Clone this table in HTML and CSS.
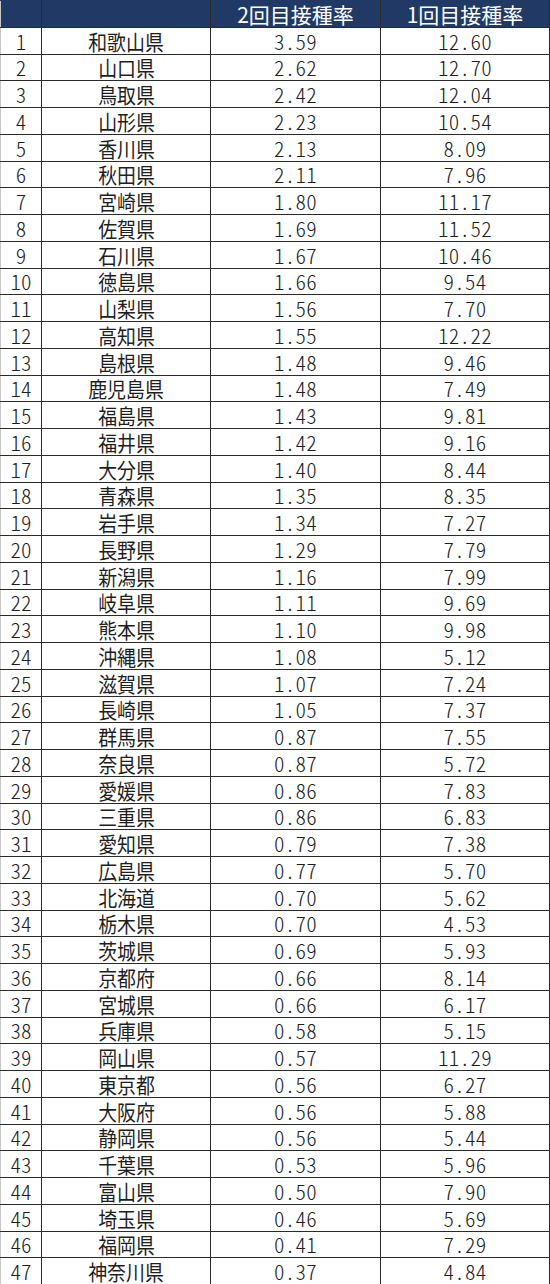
FILE: index.html
```html
<!DOCTYPE html>
<html lang="ja">
<head>
<meta charset="utf-8">
<title>接種率</title>
<link rel="stylesheet" href="styles.css">
</head>
<body>
<table class="rate-table">
  <colgroup>
    <col class="c-rank">
    <col class="c-pref">
    <col class="c-second">
    <col class="c-first">
  </colgroup>
  <thead>
    <tr>
      <th></th>
      <th></th>
      <th>2回目接種率</th>
      <th>1回目接種率</th>
    </tr>
  </thead>
  <tbody>
    <tr><td class="rank">1</td><td class="pref"><span>和歌山県</span></td><td class="num">3.59</td><td class="num">12.60</td></tr>
    <tr><td class="rank">2</td><td class="pref"><span>山口県</span></td><td class="num">2.62</td><td class="num">12.70</td></tr>
    <tr><td class="rank">3</td><td class="pref"><span>鳥取県</span></td><td class="num">2.42</td><td class="num">12.04</td></tr>
    <tr><td class="rank">4</td><td class="pref"><span>山形県</span></td><td class="num">2.23</td><td class="num">10.54</td></tr>
    <tr><td class="rank">5</td><td class="pref"><span>香川県</span></td><td class="num">2.13</td><td class="num">8.09</td></tr>
    <tr><td class="rank">6</td><td class="pref"><span>秋田県</span></td><td class="num">2.11</td><td class="num">7.96</td></tr>
    <tr><td class="rank">7</td><td class="pref"><span>宮崎県</span></td><td class="num">1.80</td><td class="num">11.17</td></tr>
    <tr><td class="rank">8</td><td class="pref"><span>佐賀県</span></td><td class="num">1.69</td><td class="num">11.52</td></tr>
    <tr><td class="rank">9</td><td class="pref"><span>石川県</span></td><td class="num">1.67</td><td class="num">10.46</td></tr>
    <tr><td class="rank">10</td><td class="pref"><span>徳島県</span></td><td class="num">1.66</td><td class="num">9.54</td></tr>
    <tr><td class="rank">11</td><td class="pref"><span>山梨県</span></td><td class="num">1.56</td><td class="num">7.70</td></tr>
    <tr><td class="rank">12</td><td class="pref"><span>高知県</span></td><td class="num">1.55</td><td class="num">12.22</td></tr>
    <tr><td class="rank">13</td><td class="pref"><span>島根県</span></td><td class="num">1.48</td><td class="num">9.46</td></tr>
    <tr><td class="rank">14</td><td class="pref"><span>鹿児島県</span></td><td class="num">1.48</td><td class="num">7.49</td></tr>
    <tr><td class="rank">15</td><td class="pref"><span>福島県</span></td><td class="num">1.43</td><td class="num">9.81</td></tr>
    <tr><td class="rank">16</td><td class="pref"><span>福井県</span></td><td class="num">1.42</td><td class="num">9.16</td></tr>
    <tr><td class="rank">17</td><td class="pref"><span>大分県</span></td><td class="num">1.40</td><td class="num">8.44</td></tr>
    <tr><td class="rank">18</td><td class="pref"><span>青森県</span></td><td class="num">1.35</td><td class="num">8.35</td></tr>
    <tr><td class="rank">19</td><td class="pref"><span>岩手県</span></td><td class="num">1.34</td><td class="num">7.27</td></tr>
    <tr><td class="rank">20</td><td class="pref"><span>長野県</span></td><td class="num">1.29</td><td class="num">7.79</td></tr>
    <tr><td class="rank">21</td><td class="pref"><span>新潟県</span></td><td class="num">1.16</td><td class="num">7.99</td></tr>
    <tr><td class="rank">22</td><td class="pref"><span>岐阜県</span></td><td class="num">1.11</td><td class="num">9.69</td></tr>
    <tr><td class="rank">23</td><td class="pref"><span>熊本県</span></td><td class="num">1.10</td><td class="num">9.98</td></tr>
    <tr><td class="rank">24</td><td class="pref"><span>沖縄県</span></td><td class="num">1.08</td><td class="num">5.12</td></tr>
    <tr><td class="rank">25</td><td class="pref"><span>滋賀県</span></td><td class="num">1.07</td><td class="num">7.24</td></tr>
    <tr><td class="rank">26</td><td class="pref"><span>長崎県</span></td><td class="num">1.05</td><td class="num">7.37</td></tr>
    <tr><td class="rank">27</td><td class="pref"><span>群馬県</span></td><td class="num">0.87</td><td class="num">7.55</td></tr>
    <tr><td class="rank">28</td><td class="pref"><span>奈良県</span></td><td class="num">0.87</td><td class="num">5.72</td></tr>
    <tr><td class="rank">29</td><td class="pref"><span>愛媛県</span></td><td class="num">0.86</td><td class="num">7.83</td></tr>
    <tr><td class="rank">30</td><td class="pref"><span>三重県</span></td><td class="num">0.86</td><td class="num">6.83</td></tr>
    <tr><td class="rank">31</td><td class="pref"><span>愛知県</span></td><td class="num">0.79</td><td class="num">7.38</td></tr>
    <tr><td class="rank">32</td><td class="pref"><span>広島県</span></td><td class="num">0.77</td><td class="num">5.70</td></tr>
    <tr><td class="rank">33</td><td class="pref"><span>北海道</span></td><td class="num">0.70</td><td class="num">5.62</td></tr>
    <tr><td class="rank">34</td><td class="pref"><span>栃木県</span></td><td class="num">0.70</td><td class="num">4.53</td></tr>
    <tr><td class="rank">35</td><td class="pref"><span>茨城県</span></td><td class="num">0.69</td><td class="num">5.93</td></tr>
    <tr><td class="rank">36</td><td class="pref"><span>京都府</span></td><td class="num">0.66</td><td class="num">8.14</td></tr>
    <tr><td class="rank">37</td><td class="pref"><span>宮城県</span></td><td class="num">0.66</td><td class="num">6.17</td></tr>
    <tr><td class="rank">38</td><td class="pref"><span>兵庫県</span></td><td class="num">0.58</td><td class="num">5.15</td></tr>
    <tr><td class="rank">39</td><td class="pref"><span>岡山県</span></td><td class="num">0.57</td><td class="num">11.29</td></tr>
    <tr><td class="rank">40</td><td class="pref"><span>東京都</span></td><td class="num">0.56</td><td class="num">6.27</td></tr>
    <tr><td class="rank">41</td><td class="pref"><span>大阪府</span></td><td class="num">0.56</td><td class="num">5.88</td></tr>
    <tr><td class="rank">42</td><td class="pref"><span>静岡県</span></td><td class="num">0.56</td><td class="num">5.44</td></tr>
    <tr><td class="rank">43</td><td class="pref"><span>千葉県</span></td><td class="num">0.53</td><td class="num">5.96</td></tr>
    <tr><td class="rank">44</td><td class="pref"><span>富山県</span></td><td class="num">0.50</td><td class="num">7.90</td></tr>
    <tr><td class="rank">45</td><td class="pref"><span>埼玉県</span></td><td class="num">0.46</td><td class="num">5.69</td></tr>
    <tr><td class="rank">46</td><td class="pref"><span>福岡県</span></td><td class="num">0.41</td><td class="num">7.29</td></tr>
    <tr><td class="rank">47</td><td class="pref"><span>神奈川県</span></td><td class="num">0.37</td><td class="num">4.84</td></tr>
  </tbody>
</table>
</body>
</html>
```

FILE: styles.css
```css
html, body {
  margin: 0;
  padding: 0;
  background: #ffffff;
}

.rate-table {
  width: 549px;
  table-layout: fixed;
  border-collapse: collapse;
  font-family: "Noto Sans CJK JP", "Noto Sans", sans-serif;
  color: #1e1e1e;
}

.c-rank { width: 41px; }
.c-pref { width: 169px; }
.c-second { width: 170px; }
.c-first { width: 169px; }

.rate-table tr {
  height: 26.75px;
}

.rate-table th,
.rate-table td {
  padding: 0;
  text-align: center;
  vertical-align: middle;
  line-height: 22px;
  border: 1px solid #2a2a2a;
  white-space: nowrap;
}

.rate-table td:first-child,
.rate-table th:first-child {
  border-left-color: #c8c8c8;
}

.rate-table th {
  background: #213965;
  color: #ffffff;
  font-weight: 400;
  font-size: 21px;
  border-top-color: #213965;
}

.rate-table td {
  font-size: 21px;
}

.rank,
.num {
  font-weight: 300;
  font-feature-settings: "hwid" 1;
}

.num {
  letter-spacing: 0.3px;
}

.pref span {
  display: inline-block;
  transform: scaleX(0.9);
}
```
